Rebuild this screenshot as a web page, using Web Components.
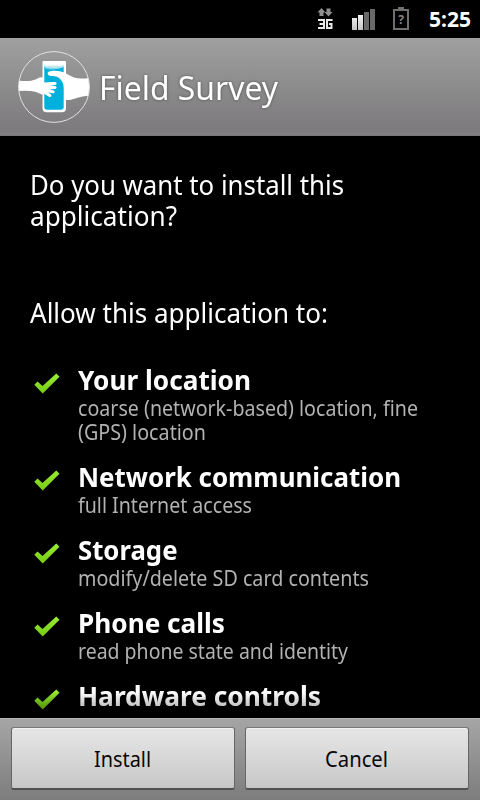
<!DOCTYPE html>
<html lang="en"><head><meta charset="utf-8"><title>Field Survey</title>
<style>html,body{margin:0;background:#000;width:480px;height:800px;overflow:hidden}</style></head>
<body><installer-screen></installer-screen>
<script>
const define=(name,markup)=>customElements.define(name,class extends HTMLElement{
  constructor(){super();this.attachShadow({mode:'open'})}
  connectedCallback(){const t=document.createElement('template');t.innerHTML=typeof markup==='function'?markup(this):markup;this.shadowRoot.replaceChildren(t.content.cloneNode(true))}
});
// One line of text fitted to the narrower proportions of the system face.
define('fit-line',e=>{
  const a=n=>e.getAttribute(n);
  return `<style>:host{display:block;flex:none;width:${a('w')}px;height:${a('h')}px}svg{display:block;overflow:visible}
  text{font-family:"Noto Sans","Open Sans",sans-serif;font-size:${a('size')}px;font-weight:${a('weight')||400};fill:currentColor}</style>
  <svg width="${a('w')}" height="${a('h')}"><text x="0" y="${a('base')}" textLength="${a('w')}" lengthAdjust="spacingAndGlyphs">${a('text')}</text></svg>`});
define('status-bar',`<style>:host{display:flex;height:38px;box-sizing:border-box;padding-left:317px;background:#000;color:#fff}
svg{display:block;flex:none}.g{width:17px;margin-right:16px}.s{margin-right:16px}.b{margin-right:19px}</style>
<svg class="g" width="17" height="38"><g fill="#8f8f8f"><path d="M.5 12.500 4.500 8l4 4.500H6.500V16h-4v-3.500zM7.500 12h2V8.500h4V12h2L11.500 16.500z"/></g>
<g fill="none" stroke="#e9e9e9" stroke-width="2"><path d="M1 20h6v8H1M2.500 24H7M15.500 20H10v8h4.500v-4H12"/></g></svg>
<svg class="s" width="25" height="38"><defs><linearGradient id="a" x2="0" y2="1"><stop stop-color="#f4f4f4"/><stop offset="1" stop-color="#c4c4c4"/></linearGradient></defs><path fill="url(#a)" d="M2 18h5v12H2zM8 15h5v15H8z"/><path fill="#696969" d="M14 12h5v18h-5zM20 9h5v21h-5z"/></svg>
<svg class="b" width="18" height="38"><path d="M3 10h14v19H3z" fill="none" stroke="#6f6f6f" stroke-width="2"/><path d="M7 7h6v3H7z" fill="#6f6f6f"/><text x="10" y="24" text-anchor="middle" fill="#858585" style="font:bold 12px 'Noto Sans',sans-serif">?</text></svg>
<fit-line style="margin-left:.5px" text="5:25" w="42" h="38" base="27" size="21" weight="700"></fit-line>`);
define('app-logo',`<style>:host{display:block;width:72px;height:72px}svg{display:block}</style>
<svg width="72" height="72" viewBox="0 0 72 72"><defs><clipPath id="c"><circle cx="36" cy="36" r="35.500"/></clipPath></defs>
<g clip-path="url(#c)"><path d="M25.500 10h21.500q1 0 1 1v46q0 4.300-4 4.300H28.500q-4 0-4-4.300V11q0-1 1-1z" fill="#fff"/>
<path d="M26.300 16h19.400v40q0 2.700-3 2.700h-13.400q-3 0-3-2.700z" fill="#00b0dc"/><path d="M26.300 17q9 3.500 19.400-1v-1.500q-10 2-19.400 0z" fill="#7dd3e8"/><ellipse cx="36" cy="15.700" rx="9.500" ry="1.200" fill="#c3e9f1"/>
<path fill="#fff" d="M72 26.700Q62 28.600 56 26.500 51 24.500 46.500 21.500 41 19.300 35 19.700q-4 .2-5 1.500c-1 2 .5 3.600 3 3.700 5-.2 8 1 10 4 2 2.500 3 5 3 9V49h6c5-1 8-3.500 20-4.300z"/>
<path fill="#fff" d="M0 29.200q6 1.500 13 .5 5-1 8.500-3.200 2.500-.5 4 .5l.5 4.500q6-.8 11-.5c2 .3 2.300 2.500 0 3l-5 .9 5 .2c2 .3 2 2.700 0 2.900l-5.500 .2 4 1.200c2 .8 1.400 3-.8 2.800l-4.500-1 2.800 2.300c1.300 1.500-.3 3-2 2.200L26.500 43q-2 1.200-5-.5-4-2.300-9-2.500-6-.4-12.500 0z"/></g>
<circle cx="36" cy="36" r="35.400" fill="none" stroke="#e2e2e2" stroke-width="1"/></svg>`);
define('app-header',`<style>:host{display:flex;align-items:center;gap:9px;height:98px;box-sizing:border-box;padding-left:18px;background:linear-gradient(#a0a0a0,#7c7a7c 94%,#818181 98%,#767676);color:#fff}
fit-line{filter:drop-shadow(0 0 1.500px #333a)}</style><app-logo></app-logo><fit-line text="Field Survey" w="179" h="98" base="62" size="33.500"></fit-line>`);
define('permission-item',`<style>:host{display:flex;color:#fff;height:73px}:host([tall]){height:97px}
svg{flex:none;margin:8.500px 18px 0 34px}.sub{color:#b2b2b2}</style>
<svg width="26" height="22"><defs><linearGradient id="g" x2="0" y2="1"><stop stop-color="#9bed35"/><stop offset="1" stop-color="#74cc12"/></linearGradient></defs><path fill="url(#g)" d="M.3 12.800 3.500 9.500l5 4.500L22.300 1.500l3.200 3.200L8.700 21.500z"/></svg>
<div><slot name="title"></slot><div class="sub"><slot></slot></div></div>`);
define('push-button',`<style>:host{display:flex;box-sizing:border-box;justify-content:center;height:63px;border:1px solid #666;border-top-color:#777;border-bottom:2px solid #505050;border-radius:3px;background:linear-gradient(#e6e6e6,#d8d8d8 48%,#c7c7c7);box-shadow:inset 0 1px #f3f3f3;color:#080808}</style><slot></slot>`);
const line=(t,w,h,b,s,x='')=>`<fit-line text="${t}" w="${w}" h="${h}" base="${b}" size="${s}" ${x}></fit-line>`;
const item=(t,w,subs)=>`<permission-item ${subs.length>1?'tall':''}>${line(t,w,32,27,27,'weight="700" slot="title"')}${subs.map(([s,v])=>line(s,v,24,21,21)).join('')}</permission-item>`;
define('installer-screen',`<style>:host{display:flex;flex-direction:column;width:480px;height:800px;background:#000;color:#fff;overflow:hidden}
status-bar,app-header,footer{flex:none}main{flex:1;min-height:0;overflow:hidden;box-sizing:border-box;mask:linear-gradient(#000 556px,#000b 572px,#0000 582px)}
.ask{padding:33px 0 0 30px}.allow{padding:67px 0 0 30px}.list{padding-top:28px}
footer{height:82px;box-sizing:border-box;padding:8px 11px;display:grid;grid-template-columns:1fr 1fr;gap:10px;border-top:1px solid #b5b5b5;background:linear-gradient(#a5a5a5,#7d7d7d)}</style>
<status-bar></status-bar><app-header></app-header><main><div class="ask">${line('Do you want to install this',314,31,26,27)}${line('application?',147,31,26,27)}</div>
<div class="allow">${line('Allow this application to:',298,37,25,27)}</div><div class="list">
${item('Your location',173,[['coarse (network-based) location, fine',340],['(GPS) location',128]])}
${item('Network communication',323,[['full Internet access',174]])}${item('Storage',99.5,[['modify/delete SD card contents',291]])}
${item('Phone calls',147,[['read phone state and identity',270]])}${item('Hardware controls',243,[])}</div></main>
<footer><push-button>${line('Install',57,60,39,22.5,'style="margin-right:1px"')}</push-button><push-button>${line('Cancel',63,60,39,22.5,'style="margin-right:1px"')}</push-button></footer>`);
</script></body></html>
